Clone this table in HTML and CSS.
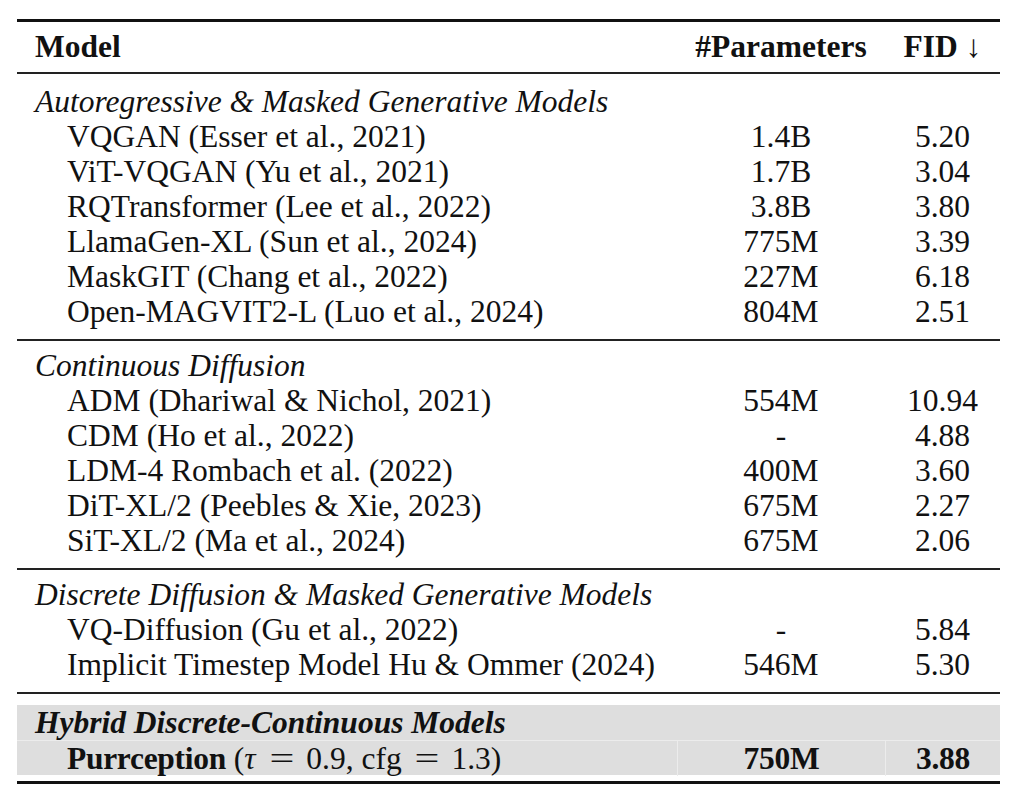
FILE: index.html
```html
<!DOCTYPE html>
<html lang="en">
<head>
<meta charset="utf-8">
<title>FID comparison table</title>
<link rel="stylesheet" href="styles.css">
</head>
<body>
<div class="table">
  <div class="row head">
    <div class="cell model">Model</div>
    <div class="cell num">#Parameters</div>
    <div class="cell num">FID <span class="arrow">↓</span></div>
  </div>

  <div class="section first">
    <div class="row"><div class="cell label">Autoregressive &amp; Masked Generative Models</div></div>
    <div class="row"><div class="cell model item">VQGAN (Esser et al., 2021)</div><div class="cell num">1.4B</div><div class="cell num">5.20</div></div>
    <div class="row"><div class="cell model item">ViT-VQGAN (Yu et al., 2021)</div><div class="cell num">1.7B</div><div class="cell num">3.04</div></div>
    <div class="row"><div class="cell model item">RQTransformer (Lee et al., 2022)</div><div class="cell num">3.8B</div><div class="cell num">3.80</div></div>
    <div class="row"><div class="cell model item">LlamaGen-XL (Sun et al., 2024)</div><div class="cell num">775M</div><div class="cell num">3.39</div></div>
    <div class="row"><div class="cell model item">MaskGIT (Chang et al., 2022)</div><div class="cell num">227M</div><div class="cell num">6.18</div></div>
    <div class="row"><div class="cell model item">Open-MAGVIT2-L (Luo et al., 2024)</div><div class="cell num">804M</div><div class="cell num">2.51</div></div>
  </div>

  <div class="section">
    <div class="row"><div class="cell label">Continuous Diffusion</div></div>
    <div class="row"><div class="cell model item">ADM (Dhariwal &amp; Nichol, 2021)</div><div class="cell num">554M</div><div class="cell num">10.94</div></div>
    <div class="row"><div class="cell model item">CDM (Ho et al., 2022)</div><div class="cell num">-</div><div class="cell num">4.88</div></div>
    <div class="row"><div class="cell model item">LDM-4 Rombach et al. (2022)</div><div class="cell num">400M</div><div class="cell num">3.60</div></div>
    <div class="row"><div class="cell model item">DiT-XL/2 (Peebles &amp; Xie, 2023)</div><div class="cell num">675M</div><div class="cell num">2.27</div></div>
    <div class="row"><div class="cell model item">SiT-XL/2 (Ma et al., 2024)</div><div class="cell num">675M</div><div class="cell num">2.06</div></div>
  </div>

  <div class="section">
    <div class="row"><div class="cell label">Discrete Diffusion &amp; Masked Generative Models</div></div>
    <div class="row"><div class="cell model item">VQ-Diffusion (Gu et al., 2022)</div><div class="cell num">-</div><div class="cell num">5.84</div></div>
    <div class="row"><div class="cell model item">Implicit Timestep Model Hu &amp; Ommer (2024)</div><div class="cell num">546M</div><div class="cell num">5.30</div></div>
  </div>

  <div class="section hybrid">
    <div class="row shaded"><div class="cell label strong">Hybrid Discrete-Continuous Models</div></div>
    <div class="row shaded ours"><div class="cell model item"><b>Purrception</b> <span class="math">(<i>τ</i><span class="op">=</span>0.9, cfg<span class="op">=</span>1.3)</span></div><div class="cell num"><b>750M</b></div><div class="cell num"><b>3.88</b></div></div>
  </div>
</div>
</body>
</html>
```

FILE: styles.css
```css
html, body {
  margin: 0;
  padding: 0;
  background: #ffffff;
}

body {
  padding: 19px 0 0 17px;
}

.table {
  width: 983px;
  border-top: 3px solid #111;
  border-bottom: 3px solid #111;
  font-family: "Liberation Serif", "Times New Roman", serif;
  font-size: 31.5px;
  color: #111;
}

.row {
  display: grid;
  grid-template-columns: 660px 208px 115px;
  height: 35px;
  align-items: center;
  line-height: 35px;
}

.row .label {
  grid-column: 1 / 4;
}

.head {
  height: 50px;
  line-height: 50px;
  font-weight: bold;
  border-bottom: 2px solid #222;
}

.cell {
  white-space: nowrap;
}

.model,
.label {
  padding-left: 18px;
}

.model.item {
  padding-left: 50px;
}

.label {
  font-style: italic;
}

.label.strong {
  font-weight: bold;
}

.num {
  text-align: center;
}

.arrow {
  font-weight: normal;
}

.section {
  padding: 7px 0 10px;
  border-bottom: 2px solid #222;
}

.section.first {
  padding-top: 10px;
}

.section.hybrid {
  padding: 11px 0 6px;
  border-bottom: none;
}

.shaded {
  background: #dedede;
}

.ours {
  height: 34px;
  border-top: 1px solid #ececec;
}

.ours .num {
  border-left: 1px solid #ececec;
  height: 100%;
}

.ours b:first-child {
  letter-spacing: -0.3px;
}

.math i {
  font-style: italic;
  padding-right: 1px;
}

.math .op {
  display: inline-block;
  margin: 0 16px;
  transform: scaleX(1.4);
}
```
